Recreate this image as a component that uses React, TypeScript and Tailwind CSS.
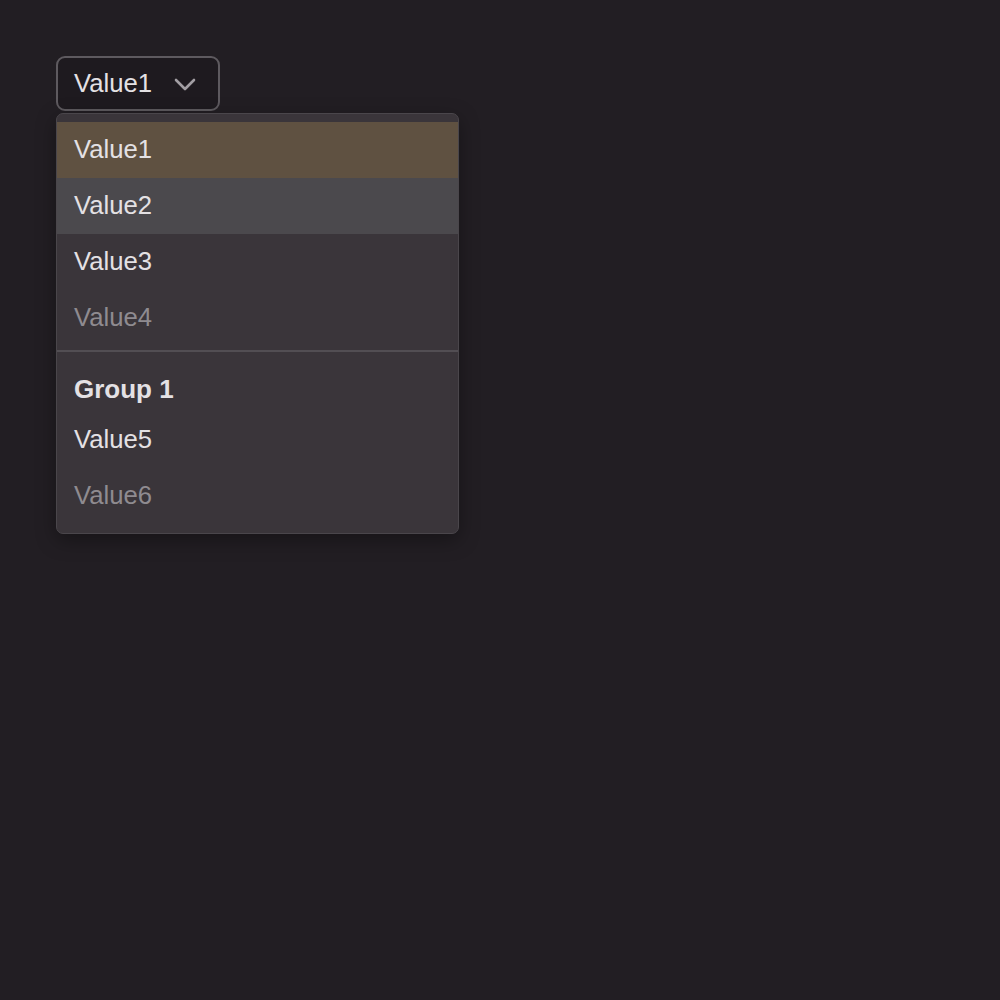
import React from "react";

const Item = ({ label, bg = "", dim = false }: { label: string; bg?: string; dim?: boolean }) => (
  <div className={`h-[56px] flex items-center pl-[17px] pb-[1px] ${bg} ${dim ? "text-[#8f8b90]" : "text-[#e4e1e4]"}`}>
    {label}
  </div>
);

export default function App() {
  return (
    <div
      className="min-h-[1000px] w-[1000px] bg-[#221e23] pt-[56px] pl-[56px] text-[25.7px]"
      style={{ fontFamily: '"Liberation Sans", Arial, sans-serif' }}
    >
      <div className="flex flex-col items-start">
        <div className="h-[55px] w-[164px] rounded-[9px] border-2 border-[#5e5a5f] bg-[#1e1a1f] flex items-center pl-[16px] text-[#e4e1e4]">
          <span>Value1</span>
          <svg className="ml-[21px]" width="24" height="16" viewBox="0 0 24 16" fill="none">
            <path d="M3 4 L12 13 L21 4" stroke="#a29ea3" strokeWidth="2.6" strokeLinecap="round" strokeLinejoin="round" />
          </svg>
        </div>
        <div className="mt-[2px] w-[403px] rounded-[7px] border border-[#4a464b] bg-[#3a353a] pt-[8px] pb-[9px] shadow-[0_6px_20px_rgba(0,0,0,0.35)] overflow-hidden">
          <Item label="Value1" bg="bg-[#5f5141]" />
          <Item label="Value2" bg="bg-[#4b494d]" />
          <Item label="Value3" />
          <Item label="Value4" dim />
          <div className="mt-[4px] h-[2px] bg-[#524e53]" />
          <div className="mt-[15px] h-[45px] flex items-center pl-[17px] font-bold text-[26px] text-[#e4e1e4]">Group 1</div>
          <Item label="Value5" />
          <Item label="Value6" dim />
        </div>
      </div>
    </div>
  );
}
